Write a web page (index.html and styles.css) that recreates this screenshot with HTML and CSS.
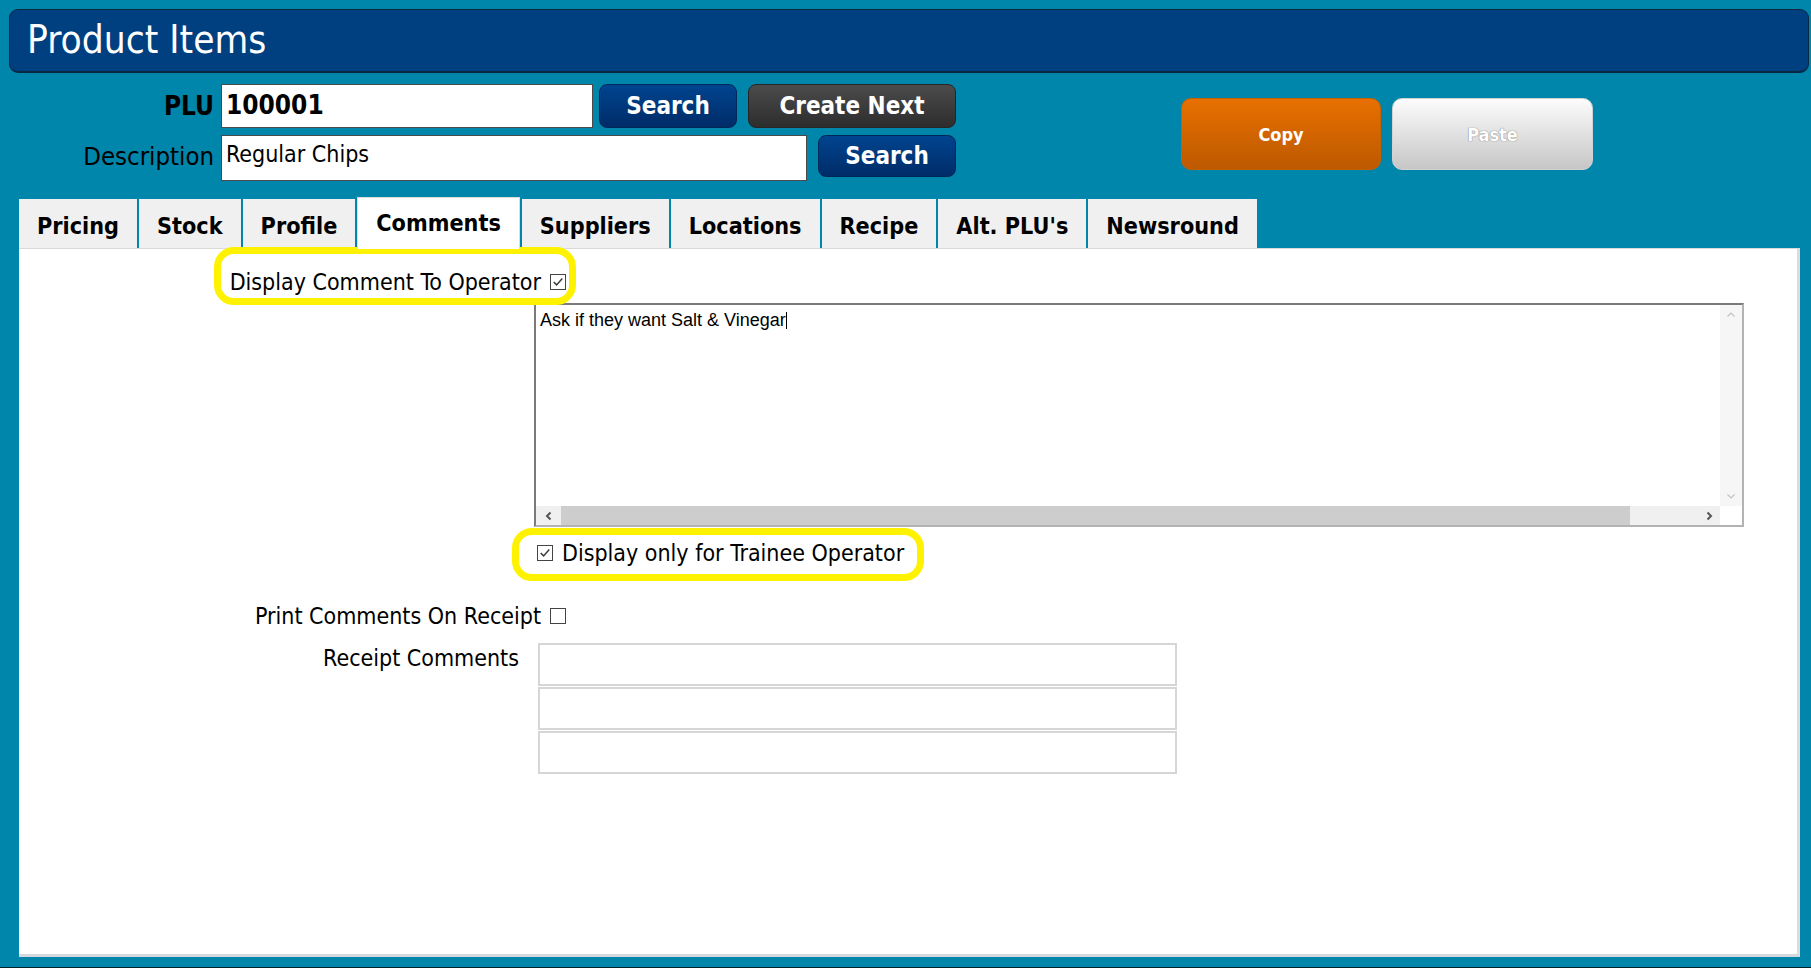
FILE: index.html
```html
<!DOCTYPE html>
<html lang="en">
<head>
    <meta charset="UTF-8">
    <meta name="viewport" content="width=device-width, initial-scale=1.0">
    <title>Product Items</title>
    <link rel="stylesheet" href="styles.css">
</head>
<body>
    <div class="window">
        <div class="title-bar">Product Items</div>

        <!-- Lookup + clipboard -->
        <div class="toolbar">
            <div class="lookup">
                <label class="lookup-label strong" for="plu">PLU</label>
                <div class="lookup-row">
                    <input type="text" id="plu" class="plu-input" value="100001">
                    <button class="btn btn-blue">Search</button>
                    <button class="btn btn-dark">Create Next</button>
                </div>
                <label class="lookup-label desc-label" for="description">Description</label>
                <div class="lookup-row">
                    <input type="text" id="description" class="desc-input" value="Regular Chips">
                    <button class="btn btn-blue btn-short">Search</button>
                </div>
            </div>
            <div class="clipboard">
                <button class="clip-btn copy">Copy</button>
                <button class="clip-btn paste">Paste</button>
            </div>
        </div>

        <ul class="tabs">
            <li class="tab">Pricing</li>
            <li class="tab">Stock</li>
            <li class="tab">Profile</li>
            <li class="tab active">Comments</li>
            <li class="tab">Suppliers</li>
            <li class="tab">Locations</li>
            <li class="tab">Recipe</li>
            <li class="tab">Alt. PLU's</li>
            <li class="tab">Newsround</li>
        </ul>

        <div class="panel">
            <div class="check-row row-display">
                <div class="label-col">
                    <span class="marked marked-display">
                        Display Comment To Operator
                        <span class="check checked"><svg viewBox="0 0 13 13"><polyline points="2.5,6.5 5.2,9.2 10.5,3.2"/></svg></span>
                    </span>
                </div>
            </div>

            <div class="memo">
                <div class="memo-text">Ask if they want Salt &amp; Vinegar<span class="caret"></span></div>
                <div class="vscroll">
                    <svg class="arrow" viewBox="0 0 10 10"><polyline points="1.5,6.5 5,3 8.5,6.5"/></svg>
                    <svg class="arrow" viewBox="0 0 10 10"><polyline points="1.5,3.5 5,7 8.5,3.5"/></svg>
                </div>
                <div class="hscroll">
                    <div class="hbutton"><svg class="arrow dark" viewBox="0 0 10 10"><polyline points="6.5,1.5 3,5 6.5,8.5"/></svg></div>
                    <div class="htrack"><div class="hthumb"></div></div>
                    <div class="hbutton"><svg class="arrow dark" viewBox="0 0 10 10"><polyline points="3.5,1.5 7,5 3.5,8.5"/></svg></div>
                </div>
                <div class="corner"></div>
            </div>

            <div class="row-trainee">
                <span class="marked marked-trainee">
                    <span class="check checked"><svg viewBox="0 0 13 13"><polyline points="2.5,6.5 5.2,9.2 10.5,3.2"/></svg></span>
                    Display only for Trainee Operator
                </span>
            </div>

            <div class="check-row row-print">
                <div class="label-col">
                    Print Comments On Receipt
                    <span class="check"></span>
                </div>
            </div>

            <div class="row-receipt">
                <div class="receipt-label">Receipt Comments</div>
                <div class="receipt-lines">
                    <input type="text" class="receipt-input">
                    <input type="text" class="receipt-input">
                    <input type="text" class="receipt-input">
                </div>
            </div>
        </div>
    </div>
</body>
</html>
```

FILE: styles.css
```css
html, body {
    margin: 0;
    height: 100%;
    overflow: hidden;
}
body {
    background: #0085ab;
    font-family: "DejaVu Sans Condensed", "DejaVu Sans", sans-serif;
    font-size: 23px;
    color: #000;
}
.window {
    height: 968px;
    box-sizing: border-box;
    display: flex;
    flex-direction: column;
    padding-bottom: 10px;
    border-bottom: 1px solid #06202c;
}

/* header */
.title-bar {
    margin: 9px 2px 0 9px;
    height: 64px;
    box-sizing: border-box;
    background: #004080;
    border: 1px solid #0d2741;
    border-bottom-width: 2px;
    border-radius: 9px;
    color: #fff;
    font-size: 38.5px;
    line-height: 60px;
    padding-left: 17px;
}

/* toolbar */
.toolbar {
    display: flex;
    align-items: flex-start;
    padding-top: 11px;
}
.lookup {
    display: grid;
    grid-template-columns: 214px auto;
    column-gap: 7px;
    row-gap: 7px;
    align-items: center;
}
.lookup-label {
    text-align: right;
    font-size: 25.5px;
}
.lookup-label.strong {
    font-weight: bold;
    font-size: 26px;
}
.desc-label {
    padding-bottom: 5px;
}
.lookup-row {
    display: flex;
    align-items: flex-start;
}
.lookup-row input {
    box-sizing: border-box;
    background: #fff;
    border: 1px solid #4a4a4a;
    font-family: inherit;
    font-size: 23px;
    padding: 0 4px;
    margin: 0;
    outline: none;
}
.plu-input {
    width: 372px;
    height: 44px;
    font-weight: bold;
    font-size: 26px !important;
    padding-bottom: 3px !important;
}
.desc-input {
    width: 586px;
    height: 46px;
    padding-bottom: 9px !important;
}
.btn {
    height: 44px;
    border-radius: 8px;
    color: #fff;
    font-family: inherit;
    font-size: 24px;
    font-weight: bold;
    padding: 0;
    cursor: pointer;
}
.btn-blue {
    width: 138px;
    margin-left: 6px;
    background: linear-gradient(#00448f, #002c68);
    border: 1px solid #00295a;
}
.btn-short {
    height: 42px;
    margin-left: 11px;
}
.btn-dark {
    width: 208px;
    margin-left: 11px;
    background: linear-gradient(#4b4b4b, #2d2d2d);
    border: 1px solid #262626;
}
.clipboard {
    display: flex;
    gap: 11px;
    margin: 14px 0 0 225px;
}
.clip-btn {
    width: 200px;
    height: 72px;
    border-radius: 10px;
    font-family: inherit;
    font-size: 18px;
    font-weight: bold;
    color: #fff;
    padding: 0;
}
.copy {
    background: linear-gradient(#e77000, #bd5900);
    border: 1px solid #c46000;
}
.paste {
    width: 201px;
    background: linear-gradient(#fcfcfc, #c6c6c6);
    border: 1px solid #d2d2d2;
    text-shadow: 0 0 1px #777, 0 0 1px #999;
}

/* tabs */
.tabs {
    list-style: none;
    margin: 16px 0 0 19px;
    padding: 0;
    height: 51px;
    display: flex;
    align-items: flex-end;
    gap: 2px;
}
.tab {
    height: 49px;
    box-sizing: border-box;
    padding: 4px 18px 0;
    background: #f0f0f0;
    font-size: 23.2px;
    font-weight: bold;
    display: flex;
    align-items: center;
}
.tab.active {
    height: 52px;
    margin-bottom: -1px;
    background: #fff;
    border: 1px solid #dcdcdc;
    border-bottom: none;
    padding: 0 18px 3px;
    position: relative;
    z-index: 1;
}

/* panel */
.panel {
    flex: 1;
    margin: 0 11px 0 19px;
    background: #fff;
    border-top: 1px solid #d9d9d9;
    border-right: 3px solid #d8dde1;
    border-bottom: 3px solid #d4d9dd;
}
.check-row {
    display: flex;
    height: 30px;
    line-height: 30px;
}
.label-col {
    width: 547px;
    display: flex;
    justify-content: flex-end;
    align-items: center;
    white-space: nowrap;
}
.row-display {
    margin-top: 18px;
}
.row-print {
    margin-top: 33px;
}
.check {
    display: inline-block;
    width: 16px;
    height: 16px;
    box-sizing: border-box;
    border: 1px solid #444;
    background: #fff;
    margin-left: 9px;
    vertical-align: middle;
}
.check svg {
    display: block;
    width: 14px;
    height: 14px;
    fill: none;
    stroke: #3c3c3c;
    stroke-width: 1.4;
}
.marked {
    position: relative;
    display: inline-flex;
    align-items: center;
    white-space: nowrap;
}
.marked::before {
    content: "";
    position: absolute;
    border: 7px solid #fff200;
    border-radius: 20px;
}
.marked-display::before {
    left: -16px;
    right: -10px;
    top: -20px;
    bottom: -8px;
}
.marked-trainee::before {
    left: -25px;
    right: -20px;
    top: -10px;
    bottom: -13px;
}

/* comment memo */
.memo {
    margin: 6px 0 0 515px;
    width: 1210px;
    height: 224px;
    box-sizing: border-box;
    border: 2px solid;
    border-color: #7b7b7b #b3b3b3 #b3b3b3 #7b7b7b;
    display: grid;
    grid-template-columns: 1fr 22px;
    grid-template-rows: 1fr 19px;
}
.memo-text {
    font-family: "Liberation Sans", Arial, sans-serif;
    font-size: 18px;
    line-height: 20px;
    padding: 5px 4px 4px;
}
.caret {
    display: inline-block;
    width: 1px;
    height: 17px;
    background: #000;
    vertical-align: -3px;
}
.vscroll {
    background: #f6f6f6;
    display: flex;
    flex-direction: column;
    justify-content: space-between;
    align-items: center;
    padding: 5px 0;
}
.arrow {
    width: 10px;
    height: 10px;
    fill: none;
    stroke: #c2c2c2;
    stroke-width: 1.2;
}
.arrow.dark {
    stroke: #555;
    stroke-width: 2;
}
.hscroll {
    display: flex;
    background: #f0f0f0;
}
.hbutton {
    width: 22px;
    display: flex;
    align-items: center;
    justify-content: center;
}
.hbutton:first-child {
    width: 25px;
}
.htrack {
    flex: 1;
}
.hthumb {
    width: 94%;
    height: 100%;
    background: #cdcdcd;
}
.corner {
    background: #fff;
}

.row-trainee {
    margin: 11px 0 0 518px;
    height: 30px;
    line-height: 30px;
}
.row-trainee .check {
    margin: 0 9px 0 0;
}

.row-receipt {
    display: flex;
    align-items: flex-start;
    margin-top: 12px;
}
.receipt-label {
    width: 500px;
    margin-right: 19px;
    text-align: right;
    line-height: 30px;
}
.receipt-lines {
    display: flex;
    flex-direction: column;
    gap: 1px;
}
.receipt-input {
    width: 639px;
    height: 43px;
    box-sizing: border-box;
    border: 2px solid #d6d6d6;
    margin: 0;
    outline: none;
    font-family: inherit;
    font-size: 20px;
}
```
